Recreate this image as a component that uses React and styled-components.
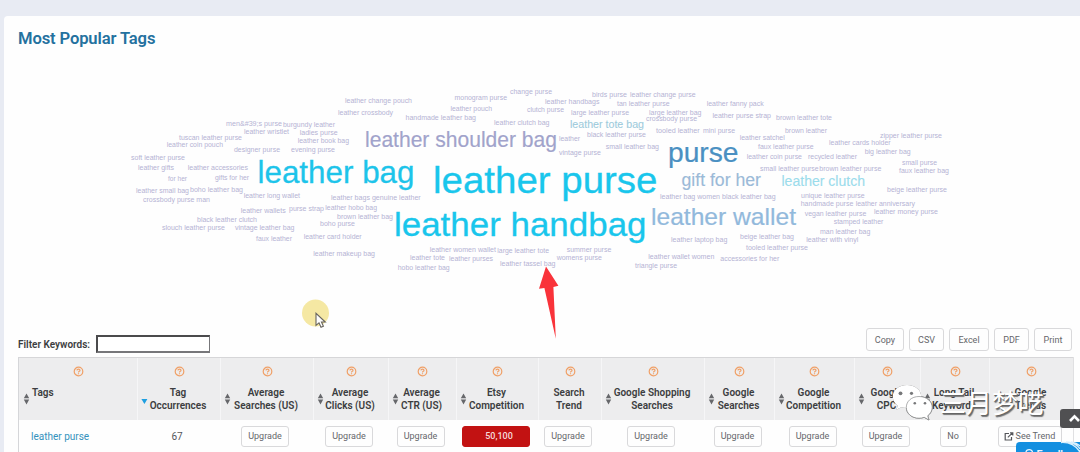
import React from "react";
import styled, { createGlobalStyle } from "styled-components";

const Global = createGlobalStyle`
  * { box-sizing: border-box; }
  html, body { margin: 0; height: 452px; overflow: hidden; background: #e8ebf3; }
  body { font-family: Roboto, "Liberation Sans", sans-serif; font-size: 10px; color: #3c3d40; }
`;

const Page = styled.div`
  position: relative;
  height: 452px;
  padding: 16px 0 0 4px;
  overflow: hidden;
`;

const Panel = styled.main`
  display: flex;
  flex-direction: column;
  height: 436px;
  padding-left: 14px;
  padding-right: 6px;
  background: #fefefe;
  border-top-left-radius: 4px;
`;

const Title = styled.h1`
  margin: 0;
  height: 44px;
  padding-top: 12px;
  font-size: 16.6px;
  letter-spacing: -0.13px;
  line-height: 22px;
  font-weight: 600;
  color: #24719f;
`;

const Cloud = styled.svg`
  display: block;
  width: 1056px;
  height: 252px;
  flex: none;
  font-family: "Liberation Sans", Arial, sans-serif;
`;

const Toolbar = styled.div`
  display: flex;
  height: 45px;
  align-items: flex-start;
  justify-content: space-between;
  padding-top: 16px;
  padding-right: 2px;
`;

const Filter = styled.label`
  display: flex;
  align-items: center;
  height: 18px;
  margin-top: 7px;
  font-weight: 600;
  font-size: 10px;
  white-space: nowrap;
`;

const FilterText = styled.span`
  width: 78px;
`;

const FilterInput = styled.input`
  width: 114px;
  height: 18px;
  padding: 0 4px;
  border: 2px solid;
  border-color: #4a4a4c #77777a #77777a #4a4a4c;
  border-right-width: 1px;
  background: #fff;
`;

const Exports = styled.div`
  display: flex;
  gap: 5px;
`;

const Button = styled.button`
  display: flex;
  align-items: center;
  justify-content: center;
  gap: 2px;
  width: ${(p) => p.$w}px;
  height: ${(p) => p.$h || 21}px;
  padding: 0;
  border: 1px solid ${(p) => (p.$danger ? "#c21212" : "#d9d9db")};
  border-radius: 3px;
  background: ${(p) => (p.$danger ? "#c21212" : "#fefefe")};
  color: ${(p) => (p.$danger ? "#f6dada" : "#66676b")};
  font: ${(p) => (p.$danger ? 500 : 400)} 9px Roboto, sans-serif;
  white-space: nowrap;
  ${(p) => p.$danger && "padding-left: 7px;"}
`;

const Table = styled.div`
  flex: 1;
  border-left: 1px solid #d5d6d9;
  border-right: 1px solid #e0e0e2;
`;

const columnGrid = "118px 83px 93px 75px 68px 82px 63px 103px 70px 80px 66px 69px 1fr";

const HeadRow = styled.div`
  display: grid;
  grid-template-columns: ${columnGrid};
  height: 63px;
  background: #ededee;
  border-top: 1px solid #d6d6d8;
`;

const HeadCell = styled.div`
  display: grid;
  grid-template-rows: 14px 26px;
  row-gap: 8px;
  padding-top: 6px;
  border-left: 1px solid ${(p) => (p.$first ? "transparent" : "#f6f6f7")};
`;

const Help = styled.svg`
  width: 11px;
  height: 11px;
  justify-self: center;
  align-self: center;
`;

const HeadLine = styled.div`
  display: grid;
  grid-template-columns: 12px 1fr 14px;
`;

const SortIcon = styled.svg`
  width: 7px;
  height: 12px;
  margin: 7px 0 0 3px;
`;

const Label = styled.div`
  display: flex;
  flex-direction: column;
  align-items: ${(p) => (p.$left ? "flex-start" : "center")};
  line-height: 13px;
  font-size: 10px;
  font-weight: 600;
  white-space: nowrap;
  min-width: 0;
`;

const BodyRow = styled.div`
  display: grid;
  grid-template-columns: ${columnGrid};
  align-items: center;
  height: 32px;
`;

const Cell = styled.div`
  display: flex;
  justify-content: ${(p) => (p.$left ? "flex-start" : "center")};
  padding: ${(p) => (p.$left ? "0 0 0 12px" : "0 3px 0 0")};
  color: ${(p) => (p.$left ? "#3492bd" : "#55565a")};
  font-size: 10px;
`;

const Overlay = styled.svg`
  position: absolute;
  left: ${(p) => p.$x}px;
  top: ${(p) => p.$y}px;
  overflow: visible;
`;

const WeChat = styled(Overlay)`
  filter: drop-shadow(0.8px 0.8px 0.3px #666);
`;

const Watermark = styled.div`
  position: absolute;
  left: 940px;
  top: 385px;
  font: 400 26px/34px "Noto Sans CJK SC", sans-serif;
  color: #fff;
  text-shadow: 1px 1px 0 #666, 1.5px 1.5px 1px #777;
  white-space: nowrap;
`;

const UpButton = styled.div`
  position: absolute;
  left: 1060px;
  top: 409px;
  width: 24px;
  height: 19px;
  padding: 5px 0 0 9px;
  border-radius: 3px;
  background: #505052;
`;

const Feedback = styled.div`
  position: absolute;
  left: 1016px;
  top: 442px;
  width: 68px;
  height: 24px;
  display: flex;
  align-items: flex-start;
  gap: 3px;
  padding: 6px 0 0 9px;
  border-radius: 4px;
  background: #138fe0;
  color: #e8f5ff;
  font: 600 11px/13px Roboto, sans-serif;
  overflow: hidden;
`;

// text, left edge, right edge, vertical middle of the lower-case letters
const smallWords = [
  ["leather change pouch", 345, 412, 100.5], ["monogram purse", 454.5, 507, 97.5], ["change purse", 510, 552, 92],
  ["leather handbags", 545, 599.5, 102], ["birds purse", 592, 627, 94.5], ["leather change purse", 630, 695.7, 94.5],
  ["tan leather purse", 617, 669.7, 104], ["leather fanny pack", 706.7, 763.7, 104], ["leather crossbody", 338, 393, 112.5],
  ["leather pouch", 450.5, 492, 109.3], ["clutch purse", 527, 564, 110], ["large leather purse", 571, 629, 112.7],
  ["large leather bag", 649, 701.5, 112.7], ["leather purse strap", 712.5, 771, 116], ["brown leather tote", 776, 832, 118],
  ["handmade leather bag", 405.5, 476, 118], ["crossbody purse", 646, 697, 119.3], ["leather clutch bag", 494, 549.5, 123.3],
  ["men&#39;s purse", 226, 282, 124], ["burgundy leather", 283, 335, 125], ["leather wristlet", 244, 289, 132],
  ["ladies purse", 299.7, 337.7, 132.5], ["tuscan leather purse", 179, 242, 137.5], ["leather book bag", 297.7, 349, 141],
  ["leather coin pouch", 166.7, 223, 145.3], ["designer purse", 234, 280, 150], ["evening purse", 291, 335, 149.5],
  ["soft leather purse", 131, 185, 157.7], ["leather gifts", 138, 174, 167.7], ["leather accessories", 187.7, 248, 167.5],
  ["for her", 168, 187, 178.7], ["gifts for her", 215, 249, 178.2], ["leather small bag", 136, 189, 190.7],
  ["boho leather bag", 190, 243, 190.2], ["crossbody purse man", 143, 210, 200], ["leather long wallet", 243.7, 300, 196.3],
  ["leather bags genuine leather", 331, 420.7, 197.6], ["leather wallets", 240.7, 285.7, 211.2], ["purse strap", 289, 324, 208.7],
  ["leather hobo bag", 325.3, 377, 208.2], ["black leather clutch", 197, 257, 219.7], ["brown leather bag", 337, 393, 216.5],
  ["boho purse", 320, 355, 224.4], ["slouch leather purse", 162, 225, 228.2], ["vintage leather bag", 235, 294.5, 228.2],
  ["faux leather", 256, 292, 239.2], ["leather card holder", 303.7, 361.7, 237], ["leather makeup bag", 313.3, 375, 254],
  ["leather women wallet", 429.7, 496, 249.5], ["large leather tote", 497.3, 549, 251], ["leather tote", 410, 445, 257.5],
  ["leather purses", 449, 493, 258.7], ["leather tassel bag", 500, 555.5, 263.5], ["hobo leather bag", 397.7, 449.7, 267.5],
  ["summer purse", 566.7, 611.3, 250], ["womens purse", 556.7, 602, 258], ["tooled leather", 656, 699.7, 130.7],
  ["mini purse", 703, 735, 130.5], ["black leather purse", 587, 646, 134.5], ["leather", 559, 580, 138.5],
  ["small leather bag", 605.7, 659, 147], ["vintage purse", 559, 601, 152.5], ["leather satchel", 739.7, 784.7, 138.3],
  ["brown leather", 785, 827, 131.3], ["zipper leather purse", 880, 942, 135.8], ["leather cards holder", 829, 890.7, 143],
  ["faux leather purse", 758, 813.7, 147], ["big leather bag", 864.7, 910.7, 151.5], ["leather coin purse", 746.7, 802, 157],
  ["recycled leather", 808, 857, 157], ["small purse", 902, 937, 162.5], ["faux leather bag", 899, 949, 171],
  ["small leather purse", 760, 818.7, 169], ["brown leather purse", 819.3, 881.3, 169], ["beige leather purse", 887, 947, 190],
  ["unique leather purse", 801, 864.7, 196.3], ["leather bag women", 660, 720, 197], ["black leather bag", 722, 775.7, 197],
  ["handmade purse", 800.7, 853.3, 204.3], ["leather anniversary", 855.7, 915, 204], ["vegan leather purse", 804.7, 866.3, 214],
  ["leather money purse", 874, 938, 212], ["stamped leather", 833.7, 883.3, 222], ["man leather bag", 820, 870.3, 231.5],
  ["leather with vinyl", 806.3, 858.3, 240], ["leather laptop bag", 671, 727.3, 240], ["beige leather bag", 740, 794, 237],
  ["tooled leather purse", 746, 808, 247.6], ["leather wallet women", 648.3, 714.3, 257], ["accessories for her", 720.3, 779.3, 258.7],
  ["triangle purse", 635, 677, 265.7],
];

// text, left edge, right edge, baseline, font size, colour
const bigWords = [
  ["leather purse", 433, 657.5, 193, 37.5, "#19c6ec"],
  ["leather handbag", 394, 646.5, 236, 34, "#19c6ec"],
  ["leather bag", 257.5, 414.5, 183, 32, "#1dc4ea"],
  ["leather shoulder bag", 365, 557, 147.3, 21.3, "#a1a3cb"],
  ["purse", 668, 738.5, 161.5, 28, "#4a90c2"],
  ["leather wallet", 651, 796, 225, 24, "#92b9dc"],
  ["gift for her", 681.5, 761, 185.5, 17.5, "#9bbad8"],
  ["leather clutch", 781.5, 865, 186.3, 14, "#9bdcec"],
  ["leather tote bag", 570, 644, 128, 11, "#9dcbdc"],
];

const columns = [
  { lines: ["Tags"], sort: "both", left: true },
  { lines: ["Tag", "Occurrences"], sort: "down" },
  { lines: ["Average", "Searches (US)"], sort: "both" },
  { lines: ["Average", "Clicks (US)"], sort: "both" },
  { lines: ["Average", "CTR (US)"], sort: "both" },
  { lines: ["Etsy", "Competition"], sort: "both" },
  { lines: ["Search", "Trend"] },
  { lines: ["Google Shopping", "Searches"], sort: "both" },
  { lines: ["Google", "Searches"], sort: "both" },
  { lines: ["Google", "Competition"], sort: "both" },
  { lines: ["Google", "CPC"], sort: "both" },
  { lines: ["Long Tail", "Keywords"], sort: "both" },
  { lines: ["Google", "Trends"] },
];

const exportsList = [["Copy", 38], ["CSV", 35], ["Excel", 40], ["PDF", 35], ["Print", 38]];

function HelpIcon() {
  return (
    <Help viewBox="0 0 11 11" fill="none" stroke="#f0a067" strokeWidth="1.2">
      <circle cx="5.5" cy="5.5" r="4.3" />
      <path d="M3.9 4.4C4 2.8 7 2.8 7 4.4C7 5.4 5.5 5.3 5.5 6.5M5.5 7.3V8.3" />
    </Help>
  );
}

function Sort({ kind }) {
  if (!kind) return <span />;
  return (
    <SortIcon viewBox="0 0 7 12">
      {kind === "both" ? (
        <path d="M3.5 .5L6.2 5.3H.8ZM3.5 11.5L6.2 6.5H.8Z" fill="#67686b" />
      ) : (
        <path d="M.4 6H6.4L3.4 11Z" fill="#1e9fe0" />
      )}
    </SortIcon>
  );
}

const Upgrade = () => <Button $w={48}>Upgrade</Button>;

export default function App() {
  return (
    <>
      <Global />
      <Page>
        <Panel>
          <Title>Most Popular Tags</Title>
          <Cloud viewBox="18 60 1056 252">
            {smallWords.map(([t, x, r, y]) => (
              <text key={t + x} x={x} y={y + 2} fontSize="7" fill="#b5b3d4" textLength={r - x} lengthAdjust="spacingAndGlyphs">
                {t}
              </text>
            ))}
            {bigWords.map(([t, x, r, y, size, color]) => (
              <text key={t} x={x} y={y} fontSize={size} fill={color} stroke={color} strokeWidth={size / 120} textLength={r - x} lengthAdjust="spacingAndGlyphs">
                {t}
              </text>
            ))}
          </Cloud>
          <Toolbar>
            <Filter>
              <FilterText>Filter Keywords:</FilterText>
              <FilterInput />
            </Filter>
            <Exports>
              {exportsList.map(([t, w]) => (
                <Button key={t} $w={w} $h={23}>{t}</Button>
              ))}
            </Exports>
          </Toolbar>
          <Table>
            <HeadRow>
              {columns.map((c, i) => (
                <HeadCell key={i} $first={i === 0}>
                  <HelpIcon />
                  <HeadLine>
                    <Sort kind={c.sort} />
                    <Label $left={c.left}>
                      {c.lines.map((l) => <span key={l}>{l}</span>)}
                    </Label>
                  </HeadLine>
                </HeadCell>
              ))}
            </HeadRow>
            <BodyRow>
              <Cell $left>leather purse</Cell>
              <Cell>67</Cell>
              <Cell><Upgrade /></Cell>
              <Cell><Upgrade /></Cell>
              <Cell><Upgrade /></Cell>
              <Cell><Button $w={68} $danger>50,100</Button></Cell>
              <Cell><Upgrade /></Cell>
              <Cell><Upgrade /></Cell>
              <Cell><Upgrade /></Cell>
              <Cell><Upgrade /></Cell>
              <Cell><Upgrade /></Cell>
              <Cell><Button $w={27}>No</Button></Cell>
              <Cell>
                <Button $w={64}>
                  <svg width="10" height="9" viewBox="0 0 10 9" fill="none" stroke="#55565a" strokeWidth="1.2">
                    <path d="M5 1.5H1.2V8H7.5V5M3.8 5.4L8.6 .9M6 .8H8.8V3.6" />
                  </svg>
                  See Trend
                </Button>
              </Cell>
            </BodyRow>
          </Table>
        </Panel>

        <Overlay $x={302} $y={299} width="28" height="32">
          <circle cx="13.5" cy="14" r="13.5" fill="#f5e8a3" />
          <path d="M14 14.3V26.4L17 23.8L19 28.2L21.4 27.2L19.5 23H23.3Z" fill="#fdfdfd" stroke="#66635d" strokeWidth="1.1" />
        </Overlay>
        <Overlay $x={538} $y={266} width="22" height="74">
          <path d="M8 .5L20.4 19.8L15.4 21L17.8 72.7L6.4 22L1 22.8Z" fill="#f9333a" />
        </Overlay>

        <WeChat $x={892} $y={384} width="42" height="38">
          <path
            d="M15 1C6.5 1 .8 6.2 .8 12.7C.8 16.5 2.8 19.6 5.8 21.6L4.4 25.7L9.2 23.2C11 23.8 13 24 15 24C23.4 24 29.2 18.8 29.2 12.5C29.2 6.2 23.4 1 15 1Z"
            fill="#fff"
          />
          <path
            d="M27 12.5C19.5 12.5 14.3 17.4 14.3 23.3C14.3 29.3 19.5 34.2 27 34.2C28.8 34.2 30.6 33.9 32.2 33.3L37 36L35.7 31.8C38.4 29.8 40.2 26.8 40.2 23.3C40.2 17.4 34.5 12.5 27 12.5Z"
            fill="#fff" stroke="#8b8c8e" strokeWidth=".7"
          />
          <g fill="#77787a">
            <circle cx="8.5" cy="9.3" r="1.9" /><circle cx="19.5" cy="9.3" r="1.6" />
            <circle cx="22.8" cy="19.3" r="1.3" /><circle cx="33" cy="19.3" r="1.3" />
          </g>
        </WeChat>
        <Watermark>三月梦呓</Watermark>

        <UpButton>
          <svg width="12" height="9" viewBox="0 0 12 9" fill="none" stroke="#fff" strokeWidth="2.6">
            <path d="M1 7L5.5 2.3L10 7" />
          </svg>
        </UpButton>
        <Feedback>
          <svg width="10" height="10" viewBox="0 0 10 10" fill="none" stroke="#e8f5ff" strokeWidth="1.4">
            <circle cx="5" cy="5" r="4" />
          </svg>
          Feedback
        </Feedback>
        <Overlay $x={1059} $y={441} width="21" height="11" fill="none" stroke="#d9effc" strokeWidth="1.3">
          <path d="M2 1.5C10 1 17 5 21 11M7 1C14 1 19 5 21 8M12 1C17 2 20 4 21 5" />
        </Overlay>
      </Page>
    </>
  );
}
